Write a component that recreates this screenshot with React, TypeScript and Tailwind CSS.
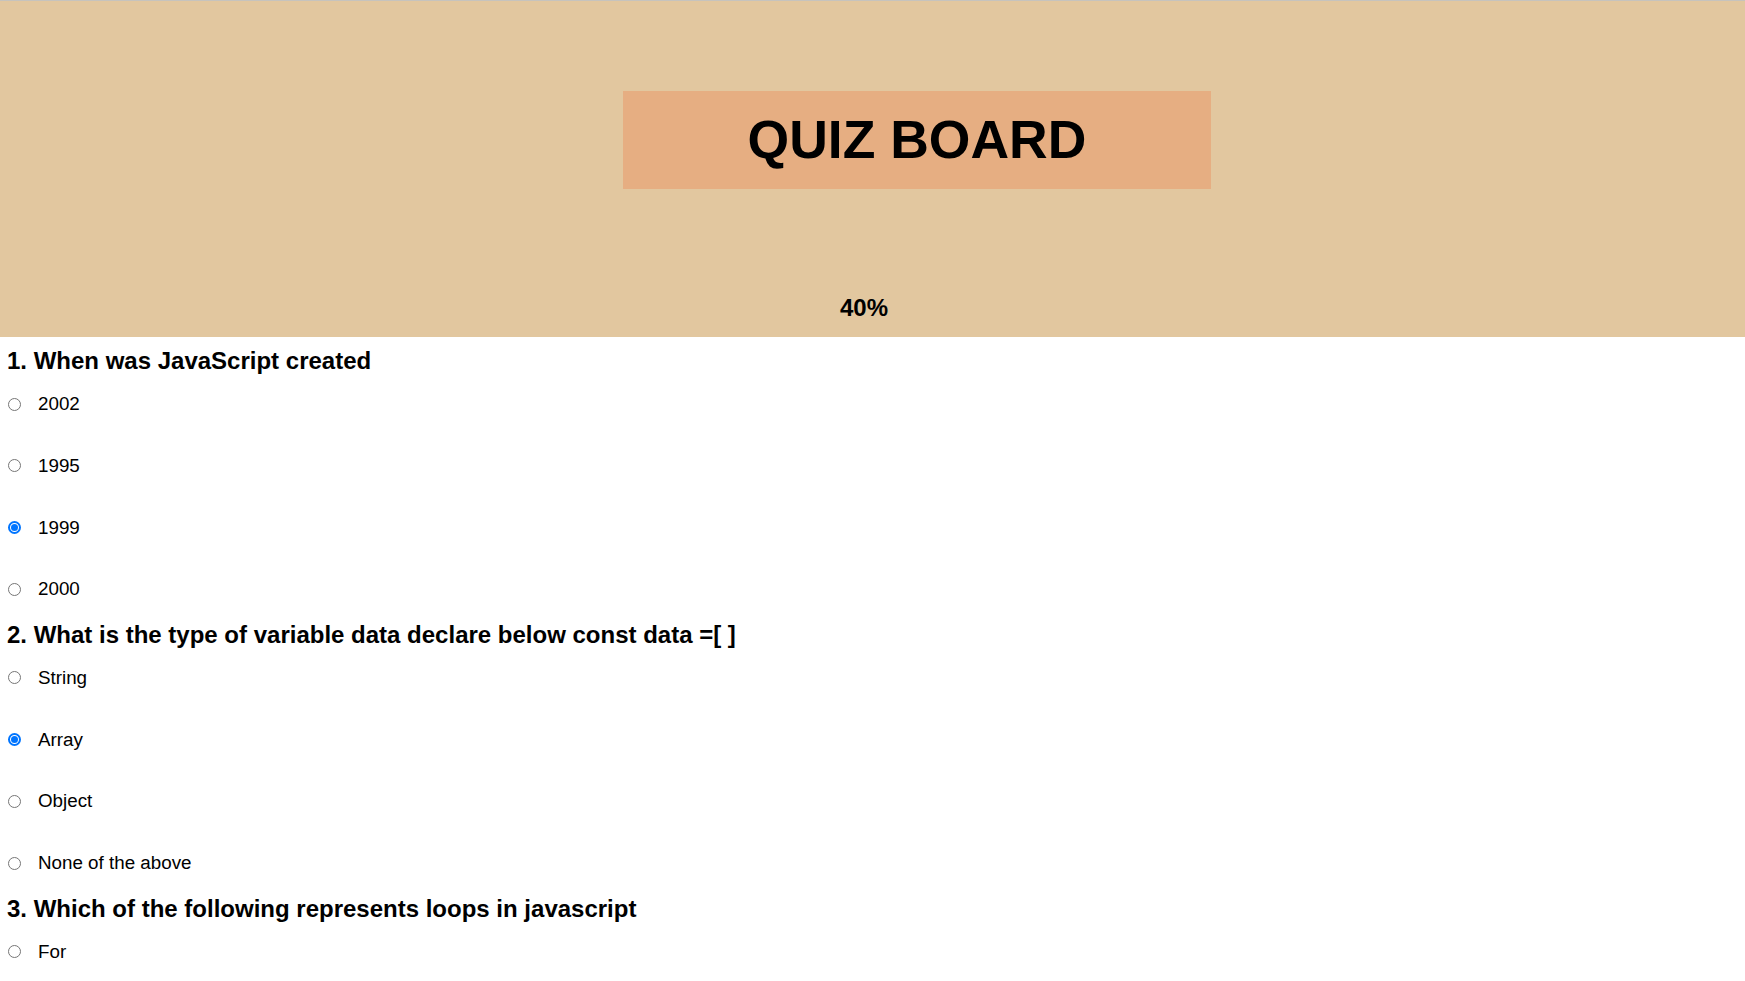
import React from "react";

type Q = { q: string; options: string[]; checked?: number };

const questions: Q[] = [
  { q: "1. When was JavaScript created", options: ["2002", "1995", "1999", "2000"], checked: 2 },
  {
    q: "2. What is the type of variable data declare below const data =[ ]",
    options: ["String", "Array", "Object", "None of the above"],
    checked: 1,
  },
  { q: "3. Which of the following represents loops in javascript", options: ["For", "While", "Do while", "All of the above"] },
];

function Radio({ checked }: { checked: boolean }) {
  return checked ? (
    <span className="flex h-[13px] w-[13px] shrink-0 items-center justify-center rounded-full border-2 border-[#0075ff] bg-white">
      <span className="h-[7px] w-[7px] rounded-full bg-[#0075ff]" />
    </span>
  ) : (
    <span className="block h-[13px] w-[13px] shrink-0 rounded-full border border-[#767676] bg-white" />
  );
}

export default function App() {
  return (
    <div className="min-h-screen bg-white text-black" style={{ fontFamily: '"Liberation Sans", Arial, sans-serif' }}>
      <header className="flex h-[337px] flex-col border-t border-[#c6c3bd] bg-[#e2c79f]">
        <div className="mt-[90px] ml-[623px] flex h-[98px] w-[588px] items-center justify-center bg-[#e6ae82]">
          <h1 className="text-[53.5px] font-bold leading-none tracking-normal">QUIZ BOARD</h1>
        </div>
        <div className="mt-[105px] pr-[17px] text-center text-[24px] font-bold leading-[28px]">40%</div>
      </header>
      <main className="flex flex-col pb-10">
        {questions.map((item, qi) => (
          <section key={qi} className={qi === 0 ? "mt-[10px]" : "mt-[21.5px]"}>
            <h2 className="pl-[7px] text-[24px] font-bold leading-[28px]">{item.q}</h2>
            <div className="mt-[19px] flex flex-col gap-[41.8px]">
              {item.options.map((o, oi) => (
                <label key={oi} className="flex h-[20px] items-center">
                  <span className="ml-[8px]">
                    <Radio checked={item.checked === oi} />
                  </span>
                  <span className="ml-[17px] text-[18.8px] leading-[20px]">{o}</span>
                </label>
              ))}
            </div>
          </section>
        ))}
      </main>
    </div>
  );
}
